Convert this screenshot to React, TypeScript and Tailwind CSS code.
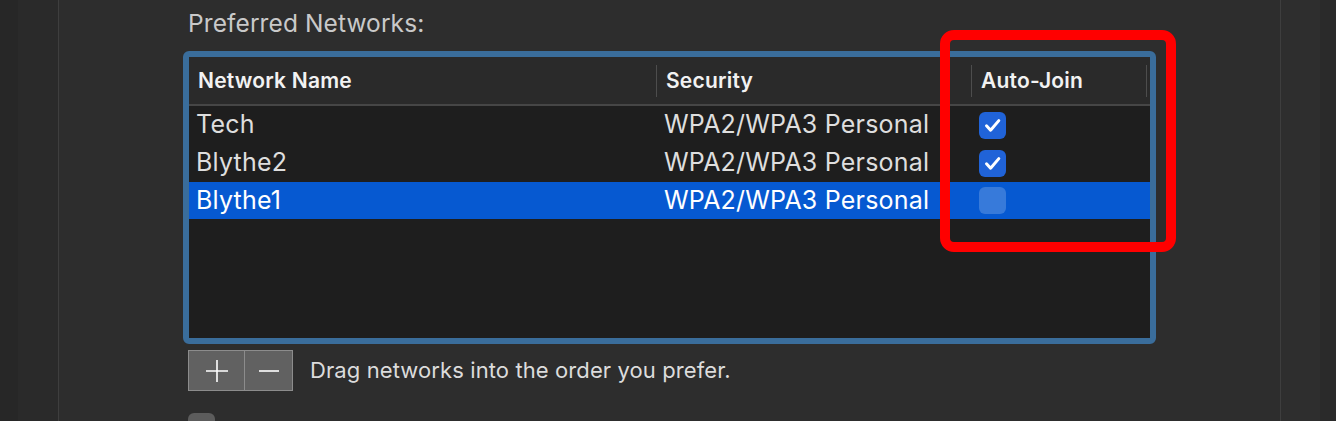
import React from 'react'

const rows = [
  { name: 'Tech', security: 'WPA2/WPA3 Personal', auto: true, selected: false, h: 'h-[38px]' },
  { name: 'Blythe2', security: 'WPA2/WPA3 Personal', auto: true, selected: false, h: 'h-[38px]' },
  { name: 'Blythe1', security: 'WPA2/WPA3 Personal', auto: false, selected: true, h: 'h-[37px]' },
]

function Check({ on }: { on: boolean }) {
  if (!on) {
    return <div className="h-[27px] w-[27px] rounded-[6px] bg-white/20" />
  }
  return (
    <div className="flex h-[27px] w-[27px] items-center justify-center rounded-[6px] bg-[#2063d8]">
      <svg width="27" height="27" viewBox="0 0 27 27" fill="none">
        <path d="M7.5 13.8 L11.6 18.2 L19.8 8.6" stroke="white" strokeWidth="3" strokeLinecap="round" strokeLinejoin="round" />
      </svg>
    </div>
  )
}

export default function App() {
  return (
    <div
      className="flex h-[421px] w-[1336px] overflow-hidden bg-[#2d2d2d] text-[#dedede]"
      style={{ fontFamily: 'Inter, "Noto Sans", "Liberation Sans", sans-serif' }}
    >
      <div className="w-[18px] shrink-0 bg-[#272727]" />
      <div className="w-[41px] shrink-0 border-r border-[#3e3e3e] bg-[#2a2a2a]" />

      <main className="relative flex-1 pl-[124px] pt-[8px]">
        <h3 className="ml-[5px] text-[24.5px] leading-[30px] tracking-[0.1px] text-[#c9c9c9]">Preferred Networks:</h3>

        <div className="mt-[13px] h-[293px] w-[973px] rounded-[6px] border-[6px] border-[#3a6d9b]">
          <div className="h-full w-full bg-[#1e1e1e]">
            {/* header */}
            <div className="grid h-[49px] grid-cols-[467px_315px_175px_1fr] items-center border-b-2 border-[#464646] bg-[#2a2a2a] text-[21px] font-semibold tracking-[0.2px] text-[#f2f2f2]">
              <div className="pl-[9px]">Network Name</div>
              <div className="flex h-[32px] items-center border-l border-[#4d4d4d] pl-[9px]">Security</div>
              <div className="flex h-[32px] items-center border-l border-[#4d4d4d] pl-[9px]">Auto-Join</div>
              <div className="h-[32px] border-l border-[#4d4d4d]" />
            </div>

            {rows.map((r) => (
              <div
                key={r.name}
                className={`grid ${r.h} grid-cols-[467px_315px_175px_1fr] items-center text-[25px] tracking-[0.2px] ${
                  r.selected ? 'bg-[#0659d1] text-white' : ''
                }`}
              >
                <div className="pl-[7px]">{r.name}</div>
                <div className="pl-[8px]">{r.security}</div>
                <div className="pl-[8px]">
                  <Check on={r.auto} />
                </div>
                <div />
              </div>
            ))}
          </div>
        </div>

        <div className="ml-[5px] mt-[6px] flex items-center">
          <div className="flex h-[41px] border-[1.5px] border-[#8c8c8c] bg-[#616161]">
            <button className="flex w-[56px] items-center justify-center border-r-[1.5px] border-[#8c8c8c]">
              <svg width="24" height="24" viewBox="0 0 24 24">
                <path d="M12 1 V23 M1 12 H23" stroke="white" strokeWidth="1.6" />
              </svg>
            </button>
            <button className="flex w-[47px] items-center justify-center">
              <svg width="24" height="24" viewBox="0 0 24 24">
                <path d="M2 12 H22" stroke="white" strokeWidth="1.6" />
              </svg>
            </button>
          </div>
          <span className="ml-[17px] text-[22px] tracking-[0.1px] text-[#dcdcdc]">Drag networks into the order you prefer.</span>
        </div>

        <div className="ml-[5px] mt-[22px] flex items-start gap-[11px]">
          <div className="h-[27px] w-[27px] shrink-0 rounded-[6px] bg-[#5c5c5c]" />
          <span className="pt-[4px] text-[22px] leading-[28px] text-[#dcdcdc]">Remember networks this computer has joined</span>
        </div>

        {/* annotation */}
        <div className="pointer-events-none absolute left-[881px] top-[30px] h-[222px] w-[236px] rounded-[14px] border-[10px] border-[#ff0000]" />
      </main>

      <div className="flex w-[56px] shrink-0 border-l border-[#3e3e3e]">
        <div className="w-[39px] bg-[#2e2e2e]" />
        <div className="flex-1 bg-[#2a2a2a]" />
      </div>
    </div>
  )
}
